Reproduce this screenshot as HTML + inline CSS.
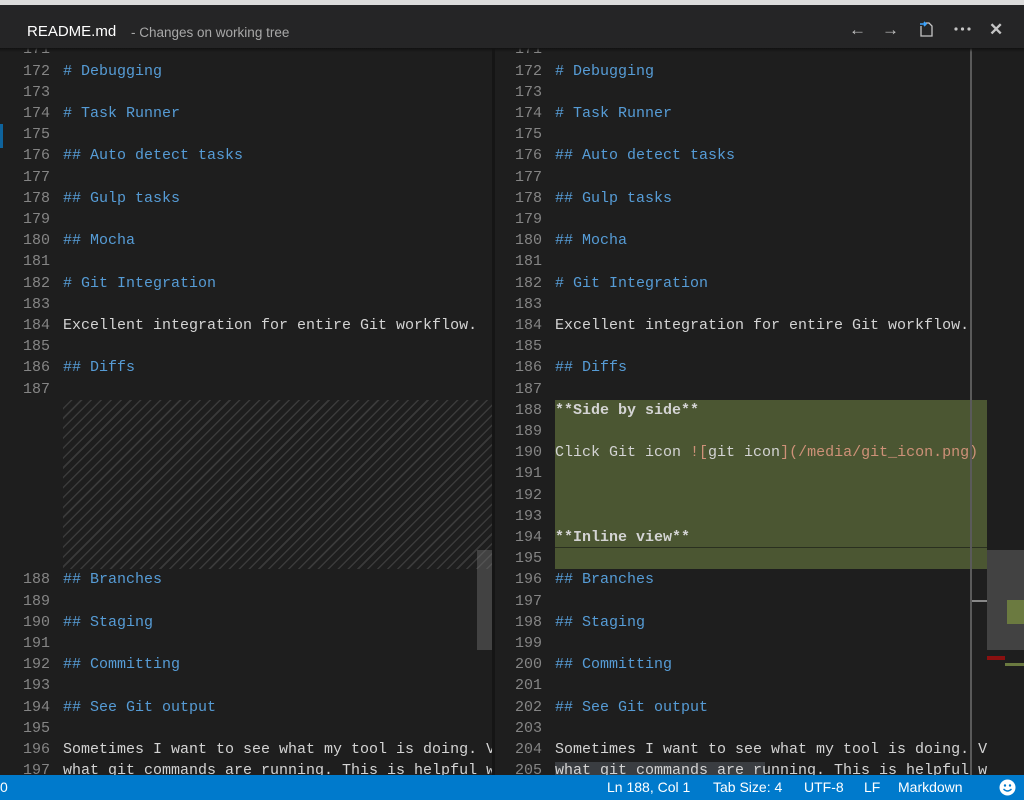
<!DOCTYPE html>
<html><head><meta charset="utf-8"><style>
*{margin:0;padding:0;box-sizing:border-box}
body{width:1024px;height:800px;overflow:hidden;background:#1e1e1e;position:relative;font-family:"Liberation Mono",monospace;}
.top{position:absolute;left:0;top:0;width:1024px;height:5px;background:#dcdcdc}
.title{position:absolute;left:0;top:5px;width:1024px;height:43px;background:#252526;font-family:"Liberation Sans",sans-serif}
.title .n{position:absolute;left:27px;top:18px;font-size:15px;color:#fff}
.title .d{position:absolute;left:131px;top:20px;font-size:13.5px;color:#a8a8a8}
.ic{position:absolute;top:15px;color:#c5c5c5;font-size:17px;font-weight:bold}
.pane{position:absolute;top:48px;height:727px;overflow:hidden}
.ln{position:absolute;height:21.2px;line-height:21.2px;font-size:15px;white-space:pre}
.num{color:#858585;text-align:right;width:40px}
.h{color:#569cd6}.t{color:#d4d4d4}.o{color:#ce9178}.b{color:#d4d4d4;font-weight:bold}
.status{position:absolute;left:0;top:775px;width:1024px;height:25px;background:#007acc;color:#fff;font-family:"Liberation Sans",sans-serif;font-size:14px}
.status span{position:absolute;top:4px}
</style></head><body>
<div class="top"></div>
<div class="title"><span class="n">README.md</span><span class="d">- Changes on working tree</span>
<span class="ic" style="left:849px">&#8592;</span><span class="ic" style="left:882px">&#8594;</span>
<svg style="position:absolute;left:918px;top:15px" width="18" height="18" viewBox="0 0 18 18"><path d="M3 6v10h11V6l-3-3H8" fill="none" stroke="#c5c5c5" stroke-width="1.3"/><path d="M2 4h6M6 2l2 2-2 2" fill="none" stroke="#3ca4ff" stroke-width="1.6"/></svg>
<svg style="position:absolute;left:954px;top:21px" width="18" height="6"><circle cx="2" cy="3" r="1.6" fill="#c5c5c5"/><circle cx="8.5" cy="3" r="1.6" fill="#c5c5c5"/><circle cx="15" cy="3" r="1.6" fill="#c5c5c5"/></svg>
<span class="ic" style="left:989px;font-size:17px;font-family:'Liberation Sans',sans-serif">&#10005;</span></div>
<div style="position:absolute;left:0;top:48px;width:1024px;height:4px;background:linear-gradient(#111,transparent);z-index:5"></div>
<div style="position:absolute;left:0;top:124px;width:3px;height:24px;background:#0e639c"></div>
<div class="pane" id="L" style="left:0;width:492px"></div>
<div style="position:absolute;left:492px;top:48px;width:3px;height:727px;background:#151515"></div>
<div class="pane" id="R" style="left:495px;width:529px"></div>
<div style="position:absolute;left:477px;top:550px;width:15px;height:100px;background:rgba(121,121,121,.4)"></div>
<div style="position:absolute;left:970px;top:48px;width:2px;height:727px;background:#5a5a5a"></div>
<div style="position:absolute;left:987px;top:550px;width:37px;height:100px;background:rgba(121,121,121,.4)"></div>
<div style="position:absolute;left:972px;top:600px;width:15px;height:2px;background:#888"></div>
<div style="position:absolute;left:1007px;top:600px;width:17px;height:24px;background:#6b7a40"></div>
<div style="position:absolute;left:987px;top:656px;width:18px;height:4px;background:#8b1010"></div>
<div style="position:absolute;left:1005px;top:663px;width:19px;height:3px;background:#6b7a40"></div>
<div class="status"><span style="left:0">0</span><span style="left:607px">Ln 188, Col 1</span><span style="left:713px">Tab Size: 4</span><span style="left:804px">UTF-8</span><span style="left:864px">LF</span><span style="left:898px">Markdown</span>
<svg style="position:absolute;left:999px;top:4px" width="17" height="17" viewBox="0 0 17 17"><circle cx="8.5" cy="8.5" r="8" fill="#fff"/><circle cx="6" cy="6.5" r="1.2" fill="#007acc"/><circle cx="11" cy="6.5" r="1.2" fill="#007acc"/><path d="M4.5 10q4 4 8 0" fill="none" stroke="#007acc" stroke-width="1.4"/></svg></div>
<script>
var c={172:'<span class="h"># Debugging</span>',174:'<span class="h"># Task Runner</span>',176:'<span class="h">## Auto detect tasks</span>',178:'<span class="h">## Gulp tasks</span>',180:'<span class="h">## Mocha</span>',182:'<span class="h"># Git Integration</span>',184:'<span class="t">Excellent integration for entire Git workflow.</span>',186:'<span class="h">## Diffs</span>'};
var tail=['<span class="h">## Branches</span>','','<span class="h">## Staging</span>','','<span class="h">## Committing</span>','','<span class="h">## See Git output</span>','','<span class="t">Sometimes I want to see what my tool is doing. V</span>','<span class="t">what git commands are running. This is helpful w</span>'];
var mid=['<span class="b">**Side by side**</span>','','<span class="t">Click Git icon </span><span class="o">![</span><span class="t">git icon</span><span class="o">](/media/git_icon.png)</span>','','','','<span class="b">**Inline view**</span>',''];
function row(p,y,n,html,off){p.innerHTML+='<div class="ln num" style="left:'+(off+10)+'px;top:'+y+'px">'+n+'</div><div class="ln" style="left:'+(off+63)+'px;top:'+y+'px">'+html+'</div>';}
var L=document.getElementById('L'),R=document.getElementById('R');
var y0=-8.6,h=21.2,ro=-3;
R.innerHTML='<div style="position:absolute;left:60px;top:'+(y0+17*h)+'px;width:432px;height:'+(8*h)+'px;background:#4b5632"></div><div style="position:absolute;left:60px;top:'+(y0+24*h-1)+'px;width:432px;height:1px;background:#2a3020"></div><div style="position:absolute;left:60px;top:'+(y0+34*h+2)+'px;width:210px;height:19px;background:#3a3d41"></div>';
L.innerHTML='<div style="position:absolute;left:63px;top:'+(y0+17*h)+'px;width:429px;height:'+(8*h)+'px;background:repeating-linear-gradient(-45deg,#1e1e1e 0 3px,#3a3a3a 3px 4.5px,#1e1e1e 4.5px 7px)"></div>';
for(var n=171;n<=187;n++){var i=n-171;row(L,y0+i*h,n,c[n]||'',0);row(R,y0+i*h,n,c[n]||'',ro);}
for(var k=0;k<8;k++)row(R,y0+(17+k)*h,188+k,mid[k],ro);
for(var k=0;k<10;k++){row(L,y0+(25+k)*h,188+k,tail[k],0);row(R,y0+(25+k)*h,196+k,tail[k],ro);}
</script>
</body></html>
